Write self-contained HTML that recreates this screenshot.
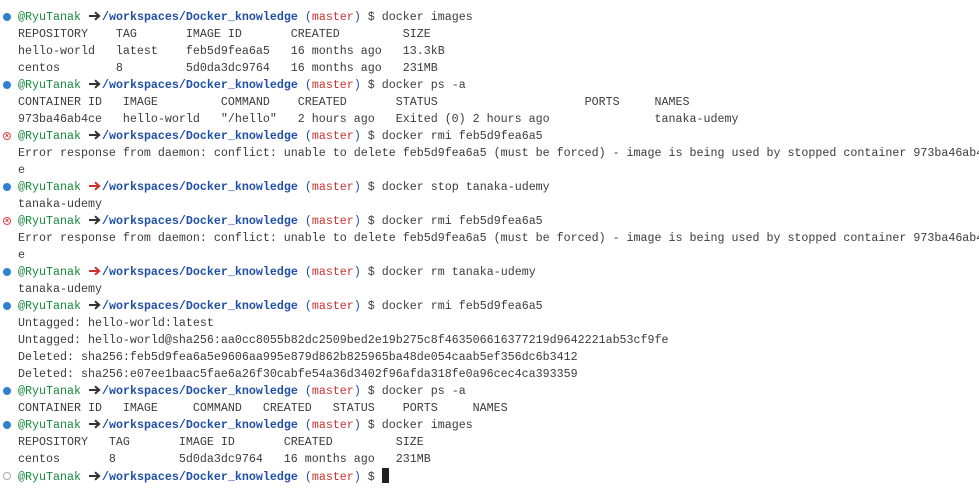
<!DOCTYPE html>
<html><head><meta charset="utf-8"><style>
html,body{margin:0;padding:0;background:#fff;width:979px;height:495px;overflow:hidden}
pre{margin:0;position:absolute;left:18px;top:9px;font-family:"Liberation Mono","DejaVu Sans Mono",monospace;font-size:11.67px;line-height:17px;color:#3b3b3b;white-space:pre;width:961px;overflow:hidden}
.g{color:#14893a}.b{color:#1f4fa6;font-weight:bold}.p{color:#1f4fa6}.r{color:#cd3131}
.ar{display:inline-block;width:7px;height:10px;position:relative;vertical-align:-1px}
.ar svg{position:absolute;left:0;top:0;overflow:visible}
.ic{position:absolute;left:3px;width:8px;height:8px;border-radius:50%;box-sizing:border-box}
.bl{background:#2f80d1}
.er{border:1.3px solid #e04545}
.er:after,.er:before{content:"";position:absolute;left:1px;top:2.4px;width:4px;height:1.2px;background:#e04545;transform:rotate(45deg)}
.er:before{transform:rotate(-45deg)}
.gy{border:1px solid #aaa}
.cur{display:inline-block;width:7px;height:15px;background:#222;vertical-align:-3px}
</style></head><body>
<svg width="0" height="0" style="position:absolute"><defs>
<symbol id="k" viewBox="0 0 13 10"><path d="M1 5H11M7 1.2L11.2 5L7 8.8" fill="none" stroke="currentColor" stroke-width="2"/></symbol>
</defs></svg>
<div class="ic bl" style="top:13px"></div>
<div class="ic bl" style="top:81px"></div>
<div class="ic er" style="top:132px"></div>
<div class="ic bl" style="top:183px"></div>
<div class="ic er" style="top:217px"></div>
<div class="ic bl" style="top:268px"></div>
<div class="ic bl" style="top:302px"></div>
<div class="ic bl" style="top:387px"></div>
<div class="ic bl" style="top:421px"></div>
<div class="ic gy" style="top:472px"></div>
<pre><span class="g">@RyuTanak</span> <span class="ar" style="color:#333"><svg width="13" height="10"><use href="#k"/></svg></span> <span class="b">/workspaces/Docker_knowledge</span> <span class="p">(</span><span class="r">master</span><span class="p">)</span> $ docker images
REPOSITORY    TAG       IMAGE ID       CREATED         SIZE
hello-world   latest    feb5d9fea6a5   16 months ago   13.3kB
centos        8         5d0da3dc9764   16 months ago   231MB
<span class="g">@RyuTanak</span> <span class="ar" style="color:#333"><svg width="13" height="10"><use href="#k"/></svg></span> <span class="b">/workspaces/Docker_knowledge</span> <span class="p">(</span><span class="r">master</span><span class="p">)</span> $ docker ps -a
CONTAINER ID   IMAGE         COMMAND    CREATED       STATUS                     PORTS     NAMES
973ba46ab4ce   hello-world   "/hello"   2 hours ago   Exited (0) 2 hours ago               tanaka-udemy
<span class="g">@RyuTanak</span> <span class="ar" style="color:#333"><svg width="13" height="10"><use href="#k"/></svg></span> <span class="b">/workspaces/Docker_knowledge</span> <span class="p">(</span><span class="r">master</span><span class="p">)</span> $ docker rmi feb5d9fea6a5
Error response from daemon: conflict: unable to delete feb5d9fea6a5 (must be forced) - image is being used by stopped container 973ba46ab4c
e
<span class="g">@RyuTanak</span> <span class="ar" style="color:#cd3131"><svg width="13" height="10"><use href="#k"/></svg></span> <span class="b">/workspaces/Docker_knowledge</span> <span class="p">(</span><span class="r">master</span><span class="p">)</span> $ docker stop tanaka-udemy
tanaka-udemy
<span class="g">@RyuTanak</span> <span class="ar" style="color:#333"><svg width="13" height="10"><use href="#k"/></svg></span> <span class="b">/workspaces/Docker_knowledge</span> <span class="p">(</span><span class="r">master</span><span class="p">)</span> $ docker rmi feb5d9fea6a5
Error response from daemon: conflict: unable to delete feb5d9fea6a5 (must be forced) - image is being used by stopped container 973ba46ab4c
e
<span class="g">@RyuTanak</span> <span class="ar" style="color:#cd3131"><svg width="13" height="10"><use href="#k"/></svg></span> <span class="b">/workspaces/Docker_knowledge</span> <span class="p">(</span><span class="r">master</span><span class="p">)</span> $ docker rm tanaka-udemy
tanaka-udemy
<span class="g">@RyuTanak</span> <span class="ar" style="color:#333"><svg width="13" height="10"><use href="#k"/></svg></span> <span class="b">/workspaces/Docker_knowledge</span> <span class="p">(</span><span class="r">master</span><span class="p">)</span> $ docker rmi feb5d9fea6a5
Untagged: hello-world:latest
Untagged: hello-world@sha256:aa0cc8055b82dc2509bed2e19b275c8f463506616377219d9642221ab53cf9fe
Deleted: sha256:feb5d9fea6a5e9606aa995e879d862b825965ba48de054caab5ef356dc6b3412
Deleted: sha256:e07ee1baac5fae6a26f30cabfe54a36d3402f96afda318fe0a96cec4ca393359
<span class="g">@RyuTanak</span> <span class="ar" style="color:#333"><svg width="13" height="10"><use href="#k"/></svg></span> <span class="b">/workspaces/Docker_knowledge</span> <span class="p">(</span><span class="r">master</span><span class="p">)</span> $ docker ps -a
CONTAINER ID   IMAGE     COMMAND   CREATED   STATUS    PORTS     NAMES
<span class="g">@RyuTanak</span> <span class="ar" style="color:#333"><svg width="13" height="10"><use href="#k"/></svg></span> <span class="b">/workspaces/Docker_knowledge</span> <span class="p">(</span><span class="r">master</span><span class="p">)</span> $ docker images
REPOSITORY   TAG       IMAGE ID       CREATED         SIZE
centos       8         5d0da3dc9764   16 months ago   231MB
<span class="g">@RyuTanak</span> <span class="ar" style="color:#333"><svg width="13" height="10"><use href="#k"/></svg></span> <span class="b">/workspaces/Docker_knowledge</span> <span class="p">(</span><span class="r">master</span><span class="p">)</span> $ <span class="cur"></span></pre>
</body></html>
